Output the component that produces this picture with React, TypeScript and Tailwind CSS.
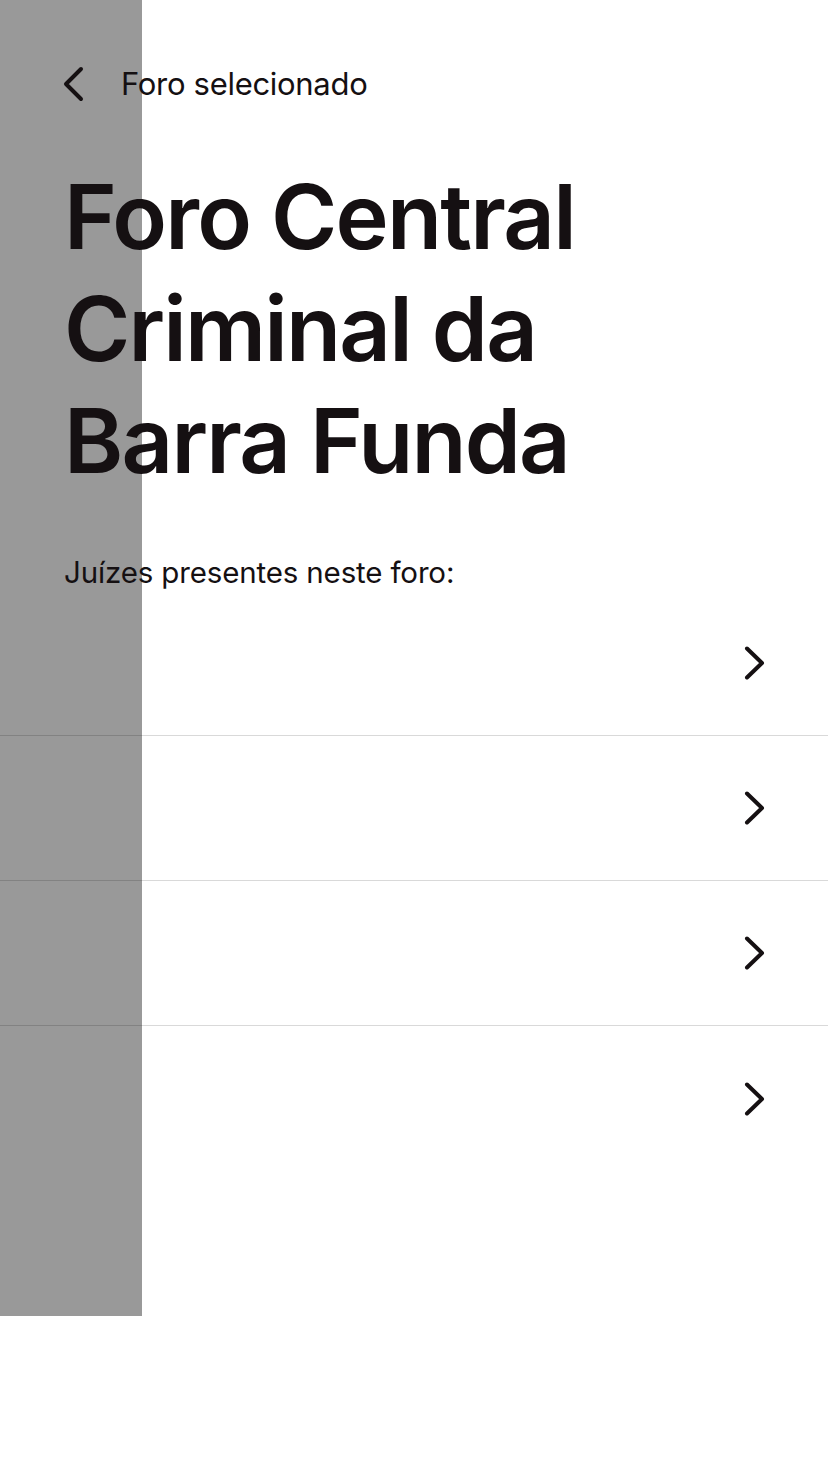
const ChevronLeft = () => (
  <svg width="22" height="36" viewBox="0 0 22 36" fill="none" className="block">
    <path d="M18 3 L3 18 L18 33" stroke="#151012" strokeWidth="4" strokeLinecap="round" strokeLinejoin="round" />
  </svg>
);

const ChevronRight = () => (
  <svg width="22" height="36" viewBox="0 0 22 36" fill="none" className="block">
    <path d="M4 3.5 L19 18 L4 32.5" stroke="#151012" strokeWidth="4" strokeLinecap="round" strokeLinejoin="round" />
  </svg>
);

const juizes = [1, 2, 3, 4];

export default function App() {
  return (
    <div
      className="relative w-[828px] h-[1472px] bg-white text-[#151012] overflow-hidden"
      style={{ fontFamily: "Inter, 'Noto Sans', sans-serif" }}
    >
      {/* placeholder side panel, sits under content */}
      <div className="absolute left-0 top-0 w-[142px] h-[1316px] bg-[#999999]" />

      <div className="relative">
        <div className="flex items-center gap-[36px] pl-[63px] pt-[66px]">
          <ChevronLeft />
          <span className="text-[31px] leading-[36px] tracking-[-0.3px]">Foro selecionado</span>
        </div>

        <h1 className="pl-[64px] mt-[59px] text-[90px] leading-[112px] font-semibold tracking-[-1.8px]">
          Foro Central
          <br />
          Criminal da
          <br />
          Barra Funda
        </h1>

        <p className="pl-[64px] mt-[57px] text-[29.5px] leading-[36px] tracking-[-0.15px]">
          Juízes presentes neste foro:
        </p>

        <ul className="mt-[1px]">
          {juizes.map((j, i) => (
            <li
              key={j}
              className={`flex items-center justify-end h-[145px] pr-[63px] ${
                i < juizes.length - 1 ? "border-b border-black/15" : ""
              }`}
            >
              <ChevronRight />
            </li>
          ))}
        </ul>
      </div>
    </div>
  );
}
